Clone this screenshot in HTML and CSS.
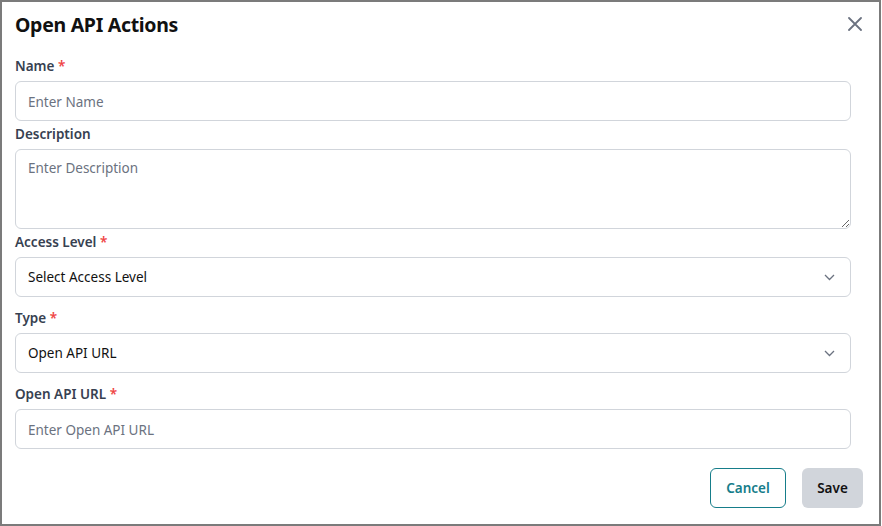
FILE: index.html
```html
<!DOCTYPE html>
<html lang="en">
<head>
<meta charset="utf-8">
<title>Open API Actions</title>
<link rel="stylesheet" href="styles.css">
</head>
<body>
<div class="dialog">
  <div class="header">
    <h1 class="title">Open API Actions</h1>
    <button class="close" aria-label="Close">
      <svg width="14" height="14" viewBox="0 0 14 14"><path d="M1 1 L13 13 M13 1 L1 13" stroke="#6b7280" stroke-width="1.8" stroke-linecap="round" fill="none"/></svg>
    </button>
  </div>
  <form class="form">
    <div class="field">
      <label class="label">Name <span class="req">*</span></label>
      <input class="input" type="text" placeholder="Enter Name">
    </div>
    <div class="field">
      <label class="label">Description</label>
      <textarea class="input textarea" placeholder="Enter Description"></textarea>
    </div>
    <div class="field spaced">
      <label class="label">Access Level <span class="req">*</span></label>
      <div class="select">
        <span>Select Access Level</span>
        <svg width="11" height="7" viewBox="0 0 11 7"><path d="M1 1 L5.5 5.5 L10 1" stroke="#6b7280" stroke-width="1.3" fill="none"/></svg>
      </div>
    </div>
    <div class="field spaced">
      <label class="label">Type <span class="req">*</span></label>
      <div class="select">
        <span>Open API URL</span>
        <svg width="11" height="7" viewBox="0 0 11 7"><path d="M1 1 L5.5 5.5 L10 1" stroke="#6b7280" stroke-width="1.3" fill="none"/></svg>
      </div>
    </div>
    <div class="field">
      <label class="label">Open API URL <span class="req">*</span></label>
      <input class="input" type="text" placeholder="Enter Open API URL">
    </div>
  </form>
  <div class="footer">
    <button class="btn btn-cancel">Cancel</button>
    <button class="btn btn-save">Save</button>
  </div>
</div>
</body>
</html>
```
FILE: styles.css
```css
* { box-sizing: border-box; }
html, body { margin: 0; padding: 0; background: #fff; }
body {
  font-family: "Noto Sans", "Open Sans", sans-serif;
  color: #111827;
}
.dialog {
  width: 881px;
  height: 526px;
  border: 2px solid #7b7b7b;
  padding: 0 16px 0 13px;
  display: flex;
  flex-direction: column;
}
.header {
  display: flex;
  align-items: center;
  justify-content: space-between;
  height: 44px;
  padding-top: 0;
}
.title {
  margin: 0;
  font-size: 19.5px;
  font-weight: 700;
  color: #111;
  letter-spacing: -0.3px;
}
.close {
  border: 0;
  background: none;
  padding: 0;
  display: flex;
  margin-right: 1px;
  cursor: pointer;
}
.form {
  margin-right: 12px;
  padding-top: 7px;
  display: flex;
  flex-direction: column;
}
.field { display: flex; flex-direction: column; }
.field.spaced { margin-bottom: 8px; }
.label {
  font-size: 13.5px;
  font-weight: 600;
  color: #374151;
  height: 20px;
  line-height: 20px;
  margin-top: 3px;
  margin-bottom: 5px;
}
.req { color: #ef4444; }
.input {
  height: 40px;
  border: 1px solid #d1d5db;
  border-radius: 6px;
  padding: 1px 12px 0;
  font-family: inherit;
  font-size: 13.5px;
  color: #111;
  outline: none;
  background: #fff;
}
.input::placeholder { color: #6b7280; }
.textarea {
  height: 80px;
  padding-top: 8px;
  resize: vertical;
  line-height: 20px;
}
.select {
  height: 40px;
  border: 1px solid #d1d5db;
  border-radius: 6px;
  padding: 0 15px 0 12px;
  display: flex;
  align-items: center;
  justify-content: space-between;
  font-size: 13.5px;
  color: #111;
}
.footer {
  display: flex;
  justify-content: flex-end;
  gap: 16px;
  margin-top: 19px;
}
.btn {
  height: 40px;
  border-radius: 6px;
  font-family: inherit;
  font-size: 13.5px;
  font-weight: 600;
  padding: 0 15px;
  cursor: pointer;
}
.btn-cancel {
  width: 76px;
  background: #fff;
  border: 1px solid #167d8a;
  color: #167d8a;
}
.btn-save {
  width: 61px;
  background: #d1d5db;
  border: 0;
  color: #111;
}
```
